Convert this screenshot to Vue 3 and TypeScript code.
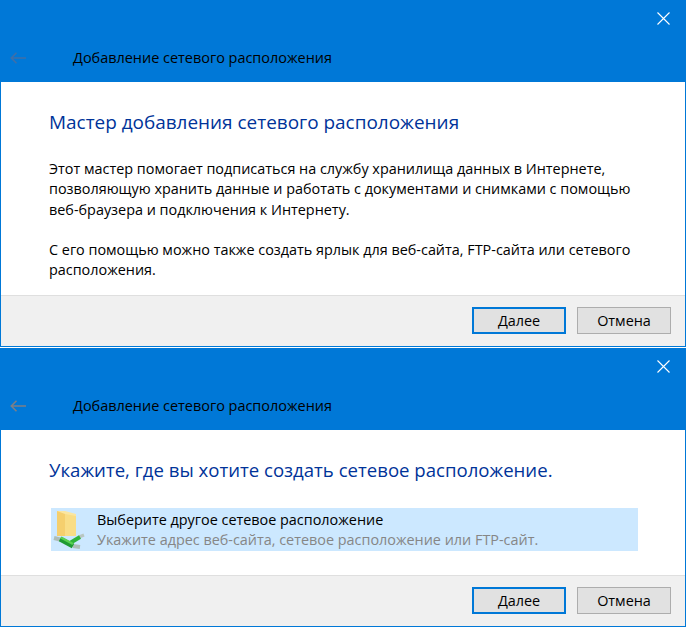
<script setup lang="ts">
const title = 'Добавление сетевого расположения'
</script>

<template>
  <div class="page">
    <section class="wizard first">
      <header class="head">
        <button class="close" aria-label="Закрыть">
          <svg width="13" height="13" viewBox="0 0 13 13"><path d="M.5.5l12 12M12.5.5l-12 12" stroke="#fff" stroke-width="1.1" fill="none" /></svg>
        </button>
        <div class="nav">
          <svg class="back" width="16" height="12" viewBox="0 0 16 12"><path d="M6.500.8 1.300 6l5.200 5.200M1.500 6H16" stroke="#3f6fa8" stroke-width="1.6" fill="none" /></svg>
          <span class="name">{{ title }}</span>
        </div>
      </header>
      <main class="body one">
        <h1>Мастер добавления сетевого расположения</h1>
        <p>Этот мастер помогает подписаться на службу хранилища данных в Интернете,<br />позволяющую хранить данные и работать с документами и снимками с помощью<br />веб-браузера и подключения к Интернету.</p>
        <p>С его помощью можно также создать ярлык для веб-сайта, FTP-сайта или сетевого<br />расположения.</p>
      </main>
      <footer class="foot">
        <button class="btn primary">Далее</button>
        <button class="btn">Отмена</button>
      </footer>
    </section>
    <section class="wizard second">
      <header class="head">
        <button class="close" aria-label="Закрыть">
          <svg width="13" height="13" viewBox="0 0 13 13"><path d="M.5.5l12 12M12.5.5l-12 12" stroke="#fff" stroke-width="1.1" fill="none" /></svg>
        </button>
        <div class="nav">
          <svg class="back" width="16" height="12" viewBox="0 0 16 12"><path d="M6.500.8 1.300 6l5.200 5.200M1.500 6H16" stroke="#7d7f86" stroke-width="1.6" fill="none" /></svg>
          <span class="name">{{ title }}</span>
        </div>
      </header>
      <main class="body two">
        <h1>Укажите, где вы хотите создать сетевое расположение.</h1>
        <div class="option">
          <svg class="ico" width="32" height="42" viewBox="0 0 32 42">
            <path d="M4 3h8l11 3v22H4z" fill="#fbe6a0" />
            <path d="M4 3l8 3v22H4z" fill="#f5cf6e" />
            <path d="M12 6l11 2v20H12z" fill="#f9dd86" />
            <path d="M1 30l6 1.500" stroke="#aebdb7" stroke-width="4" fill="none" />
            <path d="M26 29l5-2" stroke="#b9c6c1" stroke-width="3" fill="none" />
            <path d="M20 38l7 1" stroke="#aebdb7" stroke-width="4" fill="none" />
            <path d="M17 35l10-6" stroke="#2fb43a" stroke-width="4" fill="none" />
            <path d="M7 31l13 7" stroke="#1f9a33" stroke-width="5" fill="none" />
            <path d="M8 29.500l12 6.500" stroke="#58d150" stroke-width="2.500" fill="none" />
          </svg>
          <div class="text">
            <div class="t1">Выберите другое сетевое расположение</div>
            <div class="t2">Укажите адрес веб-сайта, сетевое расположение или FTP-сайт.</div>
          </div>
        </div>
      </main>
      <footer class="foot">
        <button class="btn primary">Далее</button>
        <button class="btn">Отмена</button>
      </footer>
    </section>
  </div>
</template>

<style>
html, body { margin: 0; background: #fff; }
</style>

<style scoped>
.page {
  width: 686px;
  height: 627px;
  display: flex;
  flex-direction: column;
  gap: 1px;
  overflow: hidden;
  font-family: "Open Sans", "Noto Sans", sans-serif;
  font-size: 14.4px;
  color: #000;
}
.wizard {
  box-sizing: border-box;
  display: flex;
  flex-direction: column;
  border: 1px solid #0078d7;
  border-top: 0;
  flex: none;
}
.first { height: 347px; }
.second { height: 279px; }
.head {
  height: 82px;
  margin: 0 -1px;
  background: #0078d7;
  position: relative;
  flex: none;
}
.close {
  position: absolute;
  top: 12px;
  right: 15px;
  width: 14px;
  height: 14px;
  padding: 0;
  border: 0;
  background: none;
  display: flex;
}
.nav {
  display: flex;
  align-items: center;
  height: 82px;
  padding: 33px 0 0 10px;
  box-sizing: border-box;
}
.name { margin-left: 47px; font-size: 14.45px; color: #000; }
.body { flex: 1; min-height: 0; overflow: hidden; background: #fff; padding: 0 48px; }
h1 { margin: 0; font-weight: 400; color: #003399; line-height: 24px; }
.one h1 { padding: 28px 0 25px; font-size: 18.95px; }
.two h1 { padding: 28px 0 26px; font-size: 18.6px; }
p { margin: 0 0 20px; line-height: 20.3px; }
.option {
  display: flex;
  margin: 0 -1px 0 2px;
  height: 43px;
  background: #cce8ff;
}
.ico { flex: none; margin-left: 2px; }
.text { margin-left: 12px; padding-top: 2px; }
.t1 { line-height: 20px; }
.t2 { line-height: 20px; color: #868686; }
.foot {
  flex: none;
  height: 51px;
  box-sizing: border-box;
  background: #f0f0f0;
  border-top: 1px solid #dfdfdf;
  display: flex;
  justify-content: flex-end;
  align-items: flex-start;
  gap: 11px;
  padding: 11px 14px 0 0;
}
.btn {
  width: 94px;
  height: 27px;
  box-sizing: border-box;
  border: 1px solid #adadad;
  background: #e1e1e1;
  font: inherit;
  padding: 0;
  color: #000;
}
.primary { border: 2px solid #0078d7; }
</style>
